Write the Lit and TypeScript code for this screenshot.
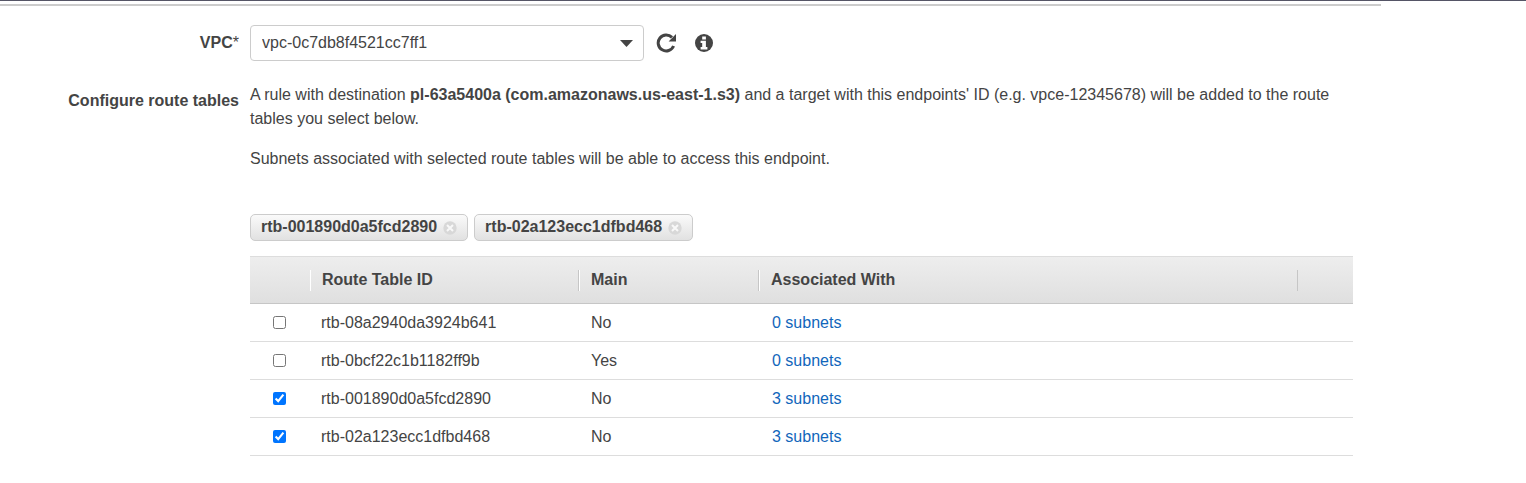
import { LitElement, html, css } from "lit";
import { customElement, state } from "lit/decorators.js";

interface RouteTable {
  id: string;
  main: string;
  subnets: number;
}

const ROUTE_TABLES: RouteTable[] = [
  { id: "rtb-08a2940da3924b641", main: "No", subnets: 0 },
  { id: "rtb-0bcf22c1b1182ff9b", main: "Yes", subnets: 0 },
  { id: "rtb-001890d0a5fcd2890", main: "No", subnets: 3 },
  { id: "rtb-02a123ecc1dfbd468", main: "No", subnets: 3 },
];

@customElement("app-root")
export class AppRoot extends LitElement {
  @state() private selected: string[] = ["rtb-001890d0a5fcd2890", "rtb-02a123ecc1dfbd468"];

  static styles = css`
    :host {
      display: block;
      background: #fff;
      color: #444;
      font: 16px/24px "Liberation Sans", Arial, sans-serif;
    }
    .top {
      border-top: 1px solid #555566;
      padding-top: 3px;
    }
    .rule {
      height: 2px;
      margin-right: 145px;
      background: #ccc;
    }
    .form {
      display: grid;
      grid-template-columns: 239px minmax(0, 1fr);
      column-gap: 11px;
      padding: 19px 173px 24px 0;
    }
    .label {
      text-align: right;
      font-weight: bold;
    }
    .vpc-label {
      padding-top: 6px;
    }
    .star {
      font-weight: normal;
    }
    .routes-label {
      padding-top: 28px;
    }
    .vpc-row {
      display: flex;
      align-items: center;
    }
    .select-box {
      display: grid;
      align-items: center;
      width: 394px;
    }
    .select-box > * {
      grid-area: 1 / 1;
    }
    .select {
      appearance: none;
      box-sizing: border-box;
      width: 100%;
      height: 36px;
      margin: 0;
      padding: 0 32px 0 11px;
      border: 1px solid #ccc;
      border-radius: 4px;
      background: #fff;
      color: #444;
      font: inherit;
    }
    .caret {
      justify-self: end;
      margin-right: 11px;
      pointer-events: none;
    }
    .icon-button {
      display: flex;
      padding: 0;
      border: 0;
      background: none;
      color: #444;
      cursor: pointer;
    }
    .refresh {
      margin-left: 12px;
    }
    .info {
      margin-left: 18px;
    }
    .text {
      margin: 0 0 16px;
    }
    .routes {
      padding-top: 22px;
    }
    .chips {
      display: flex;
      flex-wrap: wrap;
      gap: 6px;
      margin-top: 43px;
    }
    .chip {
      display: flex;
      align-items: center;
      gap: 6px;
      box-sizing: border-box;
      height: 27px;
      padding: 0 10px;
      border: 1px solid #ccc;
      border-radius: 5px;
      background: linear-gradient(#fafafa, #e1e1e1);
      font-weight: bold;
    }
    .chip-text {
      padding-bottom: 1px;
    }
    .table {
      width: 100%;
      margin-top: 15px;
      table-layout: fixed;
      border-collapse: separate;
      border-spacing: 0;
      text-align: left;
    }
    .col-check {
      width: 60px;
    }
    .col-id {
      width: 269px;
    }
    .col-main {
      width: 180px;
    }
    .col-end {
      width: 55px;
    }
    .head {
      background: linear-gradient(#eee, #dfdfdf);
    }
    .th {
      height: 46px;
      padding: 0;
      border-top: 1px solid #ddd;
      border-bottom: 1px solid #c6c6c6;
    }
    .th-inner {
      display: block;
      height: 21px;
      line-height: 20px;
      padding-left: 11px;
      border-left: 1px solid #fff;
      border-right: 1px solid #c6c6c6;
    }
    .td {
      height: 37px;
      padding: 0 0 0 11px;
      border-bottom: 1px solid #ddd;
      line-height: 20px;
    }
    .td-main {
      padding-left: 12px;
    }
    .td-link {
      padding-left: 13px;
    }
    .td-check {
      padding: 0;
    }
    .check {
      display: block;
      width: 13px;
      height: 13px;
      margin: 0 0 0 23px;
    }
    .link {
      color: #1166bb;
      text-decoration: none;
    }
  `;

  private toggle(id: string) {
    this.selected = this.selected.includes(id)
      ? this.selected.filter((s) => s !== id)
      : [...this.selected, id];
  }

  render() {
    return html`
      <div class="top"><div class="rule"></div></div>
      <div class="form">
        <label class="label vpc-label" for="vpc">VPC<span class="star">*</span></label>
        <div class="vpc-row">
          <div class="select-box">
            <select class="select" id="vpc">
              <option>vpc-0c7db8f4521cc7ff1</option>
            </select>
            <svg class="caret" width="13" height="7" viewBox="0 0 13 7" aria-hidden="true">
              <path d="M0 0h13L6.5 7z" fill="#444" />
            </svg>
          </div>
          <button class="icon-button refresh" type="button" aria-label="Refresh">
            <svg width="21" height="20" viewBox="0 0 21 20" aria-hidden="true">
              <path d="M17.6 13A8 8 0 1 1 16 4.4" fill="none" stroke="currentColor" stroke-width="3" />
              <path d="M20 1v7.4h-7.4z" fill="currentColor" />
            </svg>
          </button>
          <button class="icon-button info" type="button" aria-label="Information">
            <svg width="18" height="18" viewBox="0 0 18 18" aria-hidden="true">
              <circle cx="9" cy="9" r="9" fill="currentColor" />
              <path d="M7.2 2.4h3.7v3H7.2zM5.6 6.8h5.3v6.3h1.5v2.3H5.6v-2.3h1.6V9H5.6z" fill="#fff" />
            </svg>
          </button>
        </div>

        <div class="label routes-label" id="routes-label">Configure route tables</div>
        <div class="routes" role="group" aria-labelledby="routes-label">
          <p class="text">
            A rule with destination <b>pl-63a5400a (com.amazonaws.us-east-1.s3)</b> and a target with this
            endpoints' ID (e.g. vpce-12345678) will be added to the route tables you select below.
          </p>
          <p class="text">Subnets associated with selected route tables will be able to access this endpoint.</p>
          <div class="chips">
            ${this.selected.map(
              (id) => html`<div class="chip">
                <span class="chip-text">${id}</span>
                <button class="icon-button" type="button" aria-label="Remove ${id}" @click=${() => this.toggle(id)}>
                  <svg width="14" height="14" viewBox="0 0 14 14" aria-hidden="true">
                    <circle cx="7" cy="7" r="6.7" fill="#d8d8d8" />
                    <path d="M4 4l6 6M10 4L4 10" stroke="#f8f8f8" stroke-width="2" />
                  </svg>
                </button>
              </div>`
            )}
          </div>
          <table class="table">
            <colgroup>
              <col class="col-check" />
              <col class="col-id" />
              <col class="col-main" />
              <col />
              <col class="col-end" />
            </colgroup>
            <thead class="head">
              <tr>
                <th class="th"></th>
                <th class="th"><span class="th-inner">Route Table ID</span></th>
                <th class="th"><span class="th-inner">Main</span></th>
                <th class="th"><span class="th-inner">Associated With</span></th>
                <th class="th"></th>
              </tr>
            </thead>
            <tbody>
              ${ROUTE_TABLES.map(
                (r) => html`<tr>
                  <td class="td td-check">
                    <input
                      class="check"
                      type="checkbox"
                      aria-label="Select ${r.id}"
                      .checked=${this.selected.includes(r.id)}
                      @change=${() => this.toggle(r.id)}
                    />
                  </td>
                  <td class="td">${r.id}</td>
                  <td class="td td-main">${r.main}</td>
                  <td class="td td-link"><a class="link" href="#">${r.subnets} subnets</a></td>
                  <td class="td"></td>
                </tr>`
              )}
            </tbody>
          </table>
        </div>
      </div>
    `;
  }
}
